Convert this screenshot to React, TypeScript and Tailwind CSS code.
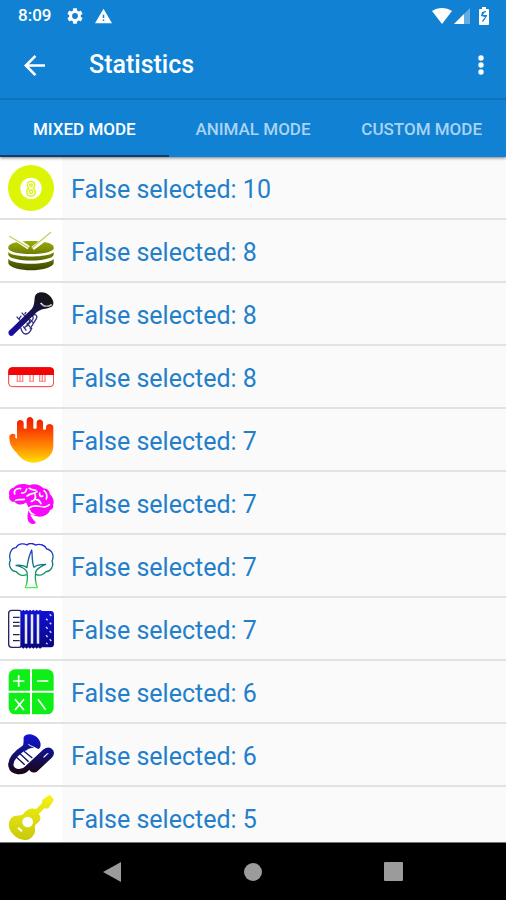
import type { ReactNode } from "react";

const TABS = ["MIXED MODE", "ANIMAL MODE", "CUSTOM MODE"];

function Gradient({ id, from, to }: { id: string; from: string; to: string }) {
  return (
    <defs>
      <linearGradient id={id} x1="0" y1="0" x2="0" y2="1">
        <stop offset="0" stopColor={from} />
        <stop offset="1" stopColor={to} />
      </linearGradient>
    </defs>
  );
}

function Picture({ box, children }: { box: string; children: ReactNode }) {
  return (
    <svg viewBox={box} className="size-[46px]" fill="none" aria-hidden="true">
      {children}
    </svg>
  );
}

function EightBall() {
  return (
    <Picture box="24 22 138 138">
      <circle cx="93" cy="91" r="69" fill="#dcf505" />
      <circle cx="93" cy="92" r="32" fill="#fff" />
      <g stroke="#dcf505" strokeWidth="4">
        <path d="M86 92c-7-7-5-21 7-21s14 14 7 21c9 6 8 23-7 23s-16-17-7-23z" />
        <circle cx="93" cy="83" r="4" />
        <circle cx="93" cy="102" r="5" />
      </g>
    </Picture>
  );
}

function Drum() {
  return (
    <Picture box="24 211 138 138">
      <defs>
        <linearGradient id="drum" gradientUnits="userSpaceOnUse" x1="0" y1="225" x2="0" y2="340">
          <stop offset="0" stopColor="#b4c80a" />
          <stop offset="1" stopColor="#3c4400" />
        </linearGradient>
      </defs>
      <g fill="url(#drum)">
        <path d="M25 268c0-24 136-24 136 0v5c-8 21-128 21-136 0z" />
        <path d="M25 283c12 18 124 18 136 0v9c-8 22-128 22-136 0z" />
        <path d="M25 303c12 20 124 20 136 0v14c-10 28-126 28-136 0z" />
      </g>
      <path d="M48 245 86 270M138 242 98 272" stroke="#fff" strokeWidth="12" />
      <path d="M27 235 86 270M153 223 96 271" stroke="#c3d45c" strokeWidth="4" />
    </Picture>
  );
}

function Trumpet() {
  return (
    <Picture box="24 22 138 138">
      <defs>
        <linearGradient id="trumpet" gradientUnits="userSpaceOnUse" x1="125" y1="45" x2="30" y2="155">
          <stop offset="0" stopColor="#15151c" />
          <stop offset="1" stopColor="#1c0cae" />
        </linearGradient>
      </defs>
      <g stroke="#303080" strokeWidth="4">
        <path d="M88 98c10-6 14 3 10 10L80 128M98 95c10-6 16 3 11 10L90 136M78 109c10-6 13 1 9 8L72 134" />
        <path d="M62 132c3 12 8 20 17 19 10-1 13-9 17-19M70 128l9 13M80 117l11 14M90 107l11 12" />
        <path d="M50 99l10 11M65 87l10 11M56 107l8-11M74 92l4-7" />
      </g>
      <path
        d="M26 143 92 79c13-12 10-28 13-42 5-15 30-15 44-1 12 11 15 27 6 33-16 8-33 5-45 17L42 152c-5 9-20 5-16-9z"
        fill="url(#trumpet)"
      />
      <path d="M122 58c8 11 20 13 33 5" stroke="#fff" strokeWidth="4" />
      <path d="M124 63c8 6 16 7 27 3" stroke="#77778c" strokeWidth="3" />
    </Picture>
  );
}

function Keyboard() {
  return (
    <Picture box="24 210 138 138">
      <rect x="26" y="251" width="135" height="57" rx="11" fill="#fff" stroke="#f33" strokeWidth="3" />
      <path d="M25 273v-11c0-8 5-12 12-12h112c8 0 13 4 13 12v11z" fill="#f00606" />
      <path
        d="M52 273v20M60 273v20M68 273v20M90 273v20M100 273v20M119 273v20M127 273v20M135 273v20"
        stroke="#f88"
        strokeWidth="4"
      />
      <path d="M50 292h20M88 292h14M117 292h20" stroke="#f88" strokeWidth="3" />
    </Picture>
  );
}

function Hand() {
  return (
    <Picture box="24 21 138 138">
      <defs>
        <linearGradient id="hand" gradientUnits="userSpaceOnUse" x1="0" y1="21" x2="0" y2="158">
          <stop offset="0" stopColor="#ee1800" />
          <stop offset=".3" stopColor="#fa4300" />
          <stop offset=".65" stopColor="#ff8a05" />
          <stop offset="1" stopColor="#ffe000" />
        </linearGradient>
      </defs>
      <path
        d="M51 86V38c1-11 18-11 20 0v16c0 3 9 3 9 0V30c2-12 17-12 20 0v24c0 3 10 3 10 0V37c2-11 17-11 19 0v20c0 3 9 3 9 0v-7c2-11 20-11 22 0v59c0 30-29 48-58 49-22-1-41-12-52-30C32 112 29 99 28 84c-2-10 9-16 18-10 0 5-3 10 5 12z"
        fill="url(#hand)"
      />
    </Picture>
  );
}

function Brain() {
  return (
    <Picture box="24 209 138 138">
      <path
        d="M78 276c-9 10-29 8-34-2-12 2-19-9-16-19-4-12 3-22 13-23 12-14 36-13 47-7 14-7 35-1 42 9 13 0 19 9 20 18 11 9 13 24 9 32 3 8-3 14-9 15-4 15-25 24-42 18-9-1-14-4-17-5 1 8 12 20 17 25-8 7-18 4-23-4-5-10-2-27 3-36z"
        fill="#fa08fa"
      />
      <g stroke="#fff" strokeWidth="5" strokeLinecap="round">
        <path d="M44 251c-4-11 7-18 18-16M65 248c11 1 13-5 15-12M88 234c5 7 14 3 19 6M47 270c8-5 16 0 26-3M81 257c10-8 22-6 30-13M94 273c12-3 14-12 11-21M119 248c-2 9 4 12 9 9M132 241c9 7 10 16 7 25M123 280c-4-8-6-12-14-12" />
        <path d="M86 294c8-8 22-9 36-5 12 4 20 0 26-6M89 300c1 9 11 12 21 11" />
      </g>
      <ellipse cx="120" cy="303" rx="24" ry="12" fill="#fa08fa" />
    </Picture>
  );
}

function Tree() {
  return (
    <Picture box="24 26 138 138">
      <defs>
        <linearGradient id="tree" gradientUnits="userSpaceOnUse" x1="0" y1="26" x2="0" y2="162">
          <stop offset="0" stopColor="#2020ee" />
          <stop offset=".5" stopColor="#147c80" />
          <stop offset=".8" stopColor="#18a858" />
          <stop offset="1" stopColor="#50f850" />
        </linearGradient>
      </defs>
      <g stroke="url(#tree)" strokeWidth="4" strokeLinejoin="round">
        <path d="M80 121c-11 5-26 1-31-9-17-1-25-20-18-34C25 60 34 40 48 40c8-14 24-13 33-8 8-8 20-4 25 0 15-5 30 1 34 12 18 3 23 22 16 36 7 16-5 32-18 32-7 10-20 13-31 8" />
        <path d="M76 160c7-16 7-33 5-46-3-12-17-17-33-21 15-1 25 0 33 7 2-18 6-36 14-53 3 19 0 37 7 52 8-8 20-9 35-9-14 6-27 12-30 23-2 14-1 31 5 47z" />
      </g>
    </Picture>
  );
}

function Accordion() {
  return (
    <Picture box="24 214 138 138">
      <Gradient id="accordion" from="#1111d8" to="#08087e" />
      <rect x="26" y="227" width="40" height="111" rx="9" fill="#fff" stroke="#242468" strokeWidth="4" />
      <path d="M39 248h20M39 263h20M39 274h20M39 300h20M39 318h20" stroke="#242450" strokeWidth="4" />
      <path
        d="M61 229h5l4-4 5 4 5-4 5 4 5-4 5 4 5-4 5 4 5-4 5 4 5-4 6 4h27c6 0 9 5 9 11v88c0 6-3 10-9 10h-27l-6 4-5-4-5 4-5-4-5 4-5-4-5 4-5-4-5 4-5-4-5 4-5-4h-4z"
        fill="url(#accordion)"
      />
      <path d="M78 239v88M96 239v88M114 239v88" stroke="#b9b9f3" strokeWidth="8" />
      <path d="M78 240v86M96 240v86M114 240v86" stroke="#fff" strokeWidth="4" />
      <path
        d="m149 239 5 5M138 252l5 5M149 264l5 5M138 277l5 5M149 289l5 5M138 302l5 5M149 314l5 5M138 325l5 3"
        stroke="#d8d8ff"
        strokeWidth="4"
      />
    </Picture>
  );
}

function Calculator() {
  return (
    <Picture box="24 25 138 138">
      <rect x="26" y="26" width="135" height="135" rx="19" fill="#10ee18" />
      <path d="M93 25v137M25 93h137" stroke="#fff" strokeWidth="6" />
      <g stroke="#fff" strokeWidth="5">
        <path d="M39 61h34M56 44v34M111 61h34" />
        <path d="m45 116 27 32M72 116l-27 32M114 116l23 31" />
      </g>
    </Picture>
  );
}

function Horn() {
  return (
    <Picture box="24 213 138 138">
      <defs>
        <linearGradient id="horn" gradientUnits="userSpaceOnUse" x1="0" y1="218" x2="0" y2="343">
          <stop offset="0" stopColor="#1313dc" />
          <stop offset=".45" stopColor="#101080" />
          <stop offset="1" stopColor="#1c0505" />
        </linearGradient>
      </defs>
      <g stroke="url(#horn)">
        <path d="M76 258C56 271 29 291 33 315c4 19 33 24 50 5l53-49c10-8 24 1 15 12l-44 42c-8 6-18-4-9-13l29-27" strokeWidth="16" />
        <path d="m48 287 26 24M57 275l29 27M72 271l25 20" strokeWidth="4" />
      </g>
      <path d="M71 229c6-14 32-12 44 4 9 11 9 25 1 31-12-5-25-6-38 5l-14-5c9-14 6-24 7-35z" fill="url(#horn)" />
      <path d="M85 250c6 6 20 7 28 17" stroke="#fff" strokeWidth="3" />
    </Picture>
  );
}

function Guitar() {
  return (
    <Picture box="24 42 138 138">
      <defs>
        <linearGradient id="guitar" gradientUnits="userSpaceOnUse" x1="0" y1="42" x2="0" y2="180">
          <stop offset="0" stopColor="#f4f414" />
          <stop offset="1" stopColor="#c8c80b" />
        </linearGradient>
      </defs>
      <path
        d="m109 84 18-19c-3-7 0-10 5-12l15-10c4-1 8 3 10 7 4 4 5 7 3 10l-12 18c-5 6-9 6-14 3l-18 18c10 12 5 23-6 29-10 5-1 18-7 30-7 14-17 20-29 19-22-1-43-20-47-39-3-19 7-33 22-34 14 0 20-1 25-10 9-12 24-14 35-10z"
        fill="url(#guitar)"
      />
      <circle cx="83" cy="123" r="16" fill="#fff" />
      <path d="m54 140 12 11" stroke="#fff" strokeWidth="6" />
    </Picture>
  );
}

const ROWS = [
  { name: "eight-ball", icon: <EightBall />, count: 10 },
  { name: "drum", icon: <Drum />, count: 8 },
  { name: "trumpet", icon: <Trumpet />, count: 8 },
  { name: "keyboard", icon: <Keyboard />, count: 8 },
  { name: "hand", icon: <Hand />, count: 7 },
  { name: "brain", icon: <Brain />, count: 7 },
  { name: "tree", icon: <Tree />, count: 7 },
  { name: "accordion", icon: <Accordion />, count: 7 },
  { name: "calculator", icon: <Calculator />, count: 6 },
  { name: "horn", icon: <Horn />, count: 6 },
  { name: "guitar", icon: <Guitar />, count: 5 },
];

function StatusBar() {
  return (
    <div className="flex h-8 items-center pr-4 pl-[18px] text-[17px] font-medium">
      <span className="mr-4">8:09</span>
      <svg viewBox="2 2 20 20" className="mr-3 size-4" fill="currentColor" aria-hidden="true">
        <path d="M19.14 12.94c.04-.3.06-.61.06-.94 0-.32-.02-.64-.07-.94l2.03-1.58c.18-.14.23-.41.12-.61l-1.92-3.32c-.12-.22-.37-.29-.59-.22l-2.39.96c-.5-.38-1.03-.7-1.62-.94l-.36-2.54c-.04-.24-.24-.41-.48-.41h-3.84c-.24 0-.43.17-.47.41l-.36 2.54c-.59.24-1.13.57-1.62.94l-2.39-.96c-.22-.08-.47 0-.59.22L2.74 8.87c-.12.21-.08.47.12.61l2.03 1.58c-.05.3-.09.63-.09.94s.02.64.07.94l-2.03 1.58c-.18.14-.23.41-.12.61l1.92 3.32c.12.22.37.29.59.22l2.39-.96c.5.38 1.03.7 1.62.94l.36 2.54c.05.24.24.41.48.41h3.84c.24 0 .44-.17.47-.41l.36-2.54c.59-.24 1.13-.56 1.62-.94l2.39.96c.22.08.47 0 .59-.22l1.92-3.32c.12-.22.07-.47-.12-.61l-2.01-1.58zM12 15.6A3.6 3.6 0 1 1 12 8.4a3.6 3.6 0 0 1 0 7.2z" />
      </svg>
      <svg viewBox="1 2 22 19" className="h-4 w-[17px]" fill="currentColor" aria-hidden="true">
        <path d="M1 21h22L12 2 1 21zm12-3h-2v-2h2v2zm0-4h-2v-4h2v4z" />
      </svg>
      <svg viewBox="0 0 20 16" className="ml-auto h-4 w-5" fill="currentColor" aria-hidden="true">
        <path d="M0 3C6-1 14-1 20 3L10 16z" />
      </svg>
      <svg viewBox="0 0 16 16" className="ml-0.5 size-4" fill="currentColor" aria-hidden="true">
        <path d="M0 16 16 0v16z" opacity=".35" />
        <path d="M0 16 10 6v10z" />
      </svg>
      <svg viewBox="0 0 12 18" className="ml-2 h-[18px] w-3" fill="currentColor" aria-hidden="true">
        <path
          fillRule="evenodd"
          d="M4 0h4v2h2q1 0 1 1v14q0 1-1 1H2q-1 0-1-1V3q0-1 1-1h2zM8 4l-4 1-1 4 4 1-3 4 1 1 4-6V8L5 8l1-2 2-1z"
        />
      </svg>
    </div>
  );
}

export default function App() {
  return (
    <div className="flex h-screen flex-col bg-[#fafafa] font-['Roboto',sans-serif]">
      <header className="relative z-10 bg-[#1182d3] text-white shadow-[0_1px_3px_rgba(0,0,0,0.5)]">
        <StatusBar />
        <div className="flex h-[68px] items-center border-b-2 border-[#0f71b7] pr-4 pl-6">
          <button type="button" aria-label="Back">
            <svg viewBox="4 4 16 16" className="size-[21px]" fill="currentColor" aria-hidden="true">
              <path d="M20 11H7.83l5.59-5.59L12 4l-8 8 8 8 1.41-1.41L7.83 13H20v-2z" />
            </svg>
          </button>
          <h1 className="ml-11 text-[25px] font-medium">Statistics</h1>
          <button type="button" aria-label="More options" className="ml-auto">
            <svg viewBox="0 0 20 20" className="size-5" fill="currentColor" aria-hidden="true">
              <circle cx="11" cy="3" r="2.7" />
              <circle cx="11" cy="10" r="2.7" />
              <circle cx="11" cy="17" r="2.7" />
            </svg>
          </button>
        </div>
        <div role="tablist" className="grid h-[57px] grid-cols-3 text-[17px] font-medium">
          {TABS.map((tab, i) => (
            <button
              key={tab}
              type="button"
              role="tab"
              aria-selected={i === 0}
              className={
                i === 0
                  ? "border-b-2 border-[#123c68] pt-1 whitespace-nowrap"
                  : "border-b-2 border-transparent pt-1 whitespace-nowrap text-[#abd3f4]"
              }
            >
              {tab}
            </button>
          ))}
        </div>
      </header>

      <ul className="min-h-0 flex-1 overflow-hidden">
        {ROWS.map((row) => (
          <li key={row.name} className="flex h-[63px] border-b-2 border-[#e2e2e2]">
            <div className="flex w-[62px] items-center justify-center bg-white pt-px">{row.icon}</div>
            <p className="flex items-center pt-1 pl-[9px] text-[25px] text-[#237fca]">
              False selected: {row.count}
            </p>
          </li>
        ))}
      </ul>

      <nav className="grid h-[58px] grid-cols-[1fr_56px_1fr] items-center border-t border-[#777] bg-black text-[#9b9b9b]">
        <button type="button" aria-label="System back" className="mr-[103px] justify-self-end">
          <svg viewBox="0 0 20 20" className="size-5" fill="currentColor" aria-hidden="true">
            <path d="M19 0v20L1 10z" />
          </svg>
        </button>
        <button type="button" aria-label="Home" className="justify-self-center">
          <svg viewBox="0 0 18 18" className="size-[18px]" fill="currentColor" aria-hidden="true">
            <circle cx="9" cy="9" r="9" />
          </svg>
        </button>
        <button type="button" aria-label="Recent apps" className="ml-[103px] justify-self-start">
          <svg viewBox="0 0 20 20" className="size-5" fill="currentColor" aria-hidden="true">
            <rect width="19" height="19" rx="1" />
          </svg>
        </button>
      </nav>
    </div>
  );
}
